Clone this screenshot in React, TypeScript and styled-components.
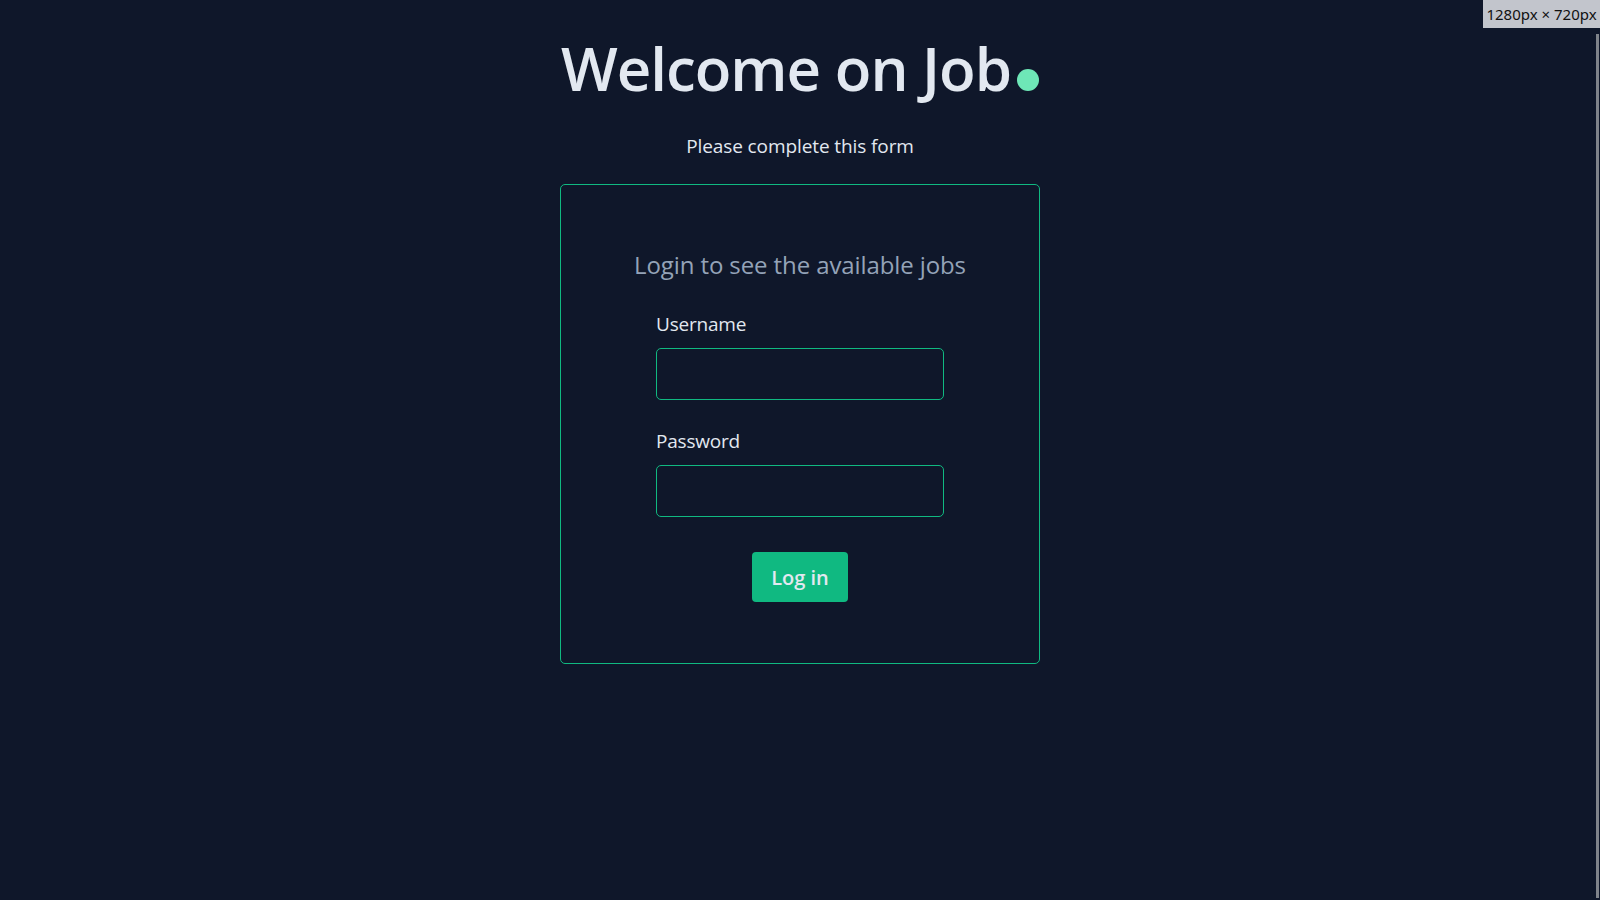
import React from "react";
import styled, { createGlobalStyle } from "styled-components";

const Global = createGlobalStyle`
  html, body { margin: 0; padding: 0; background: #0f172a; }
  body { font-family: "Open Sans", "Noto Sans", sans-serif; color: #e2e8f0; overflow: hidden; }
  * { box-sizing: border-box; }
`;

const Page = styled.main`
  min-height: 900px;
  display: flex;
  flex-direction: column;
  align-items: center;
  padding-top: 30px;
`;

const Title = styled.h1`
  margin: 0;
  font-size: 60px;
  line-height: 76px;
  font-weight: 650;
  color: #e2e8f0;
  letter-spacing: -1px;
  display: flex;
  align-items: baseline;
`;

const Dot = styled.span`
  display: inline-block;
  width: 22px;
  height: 22px;
  border-radius: 50%;
  background: #6ee7b7;
  margin-left: 6px;
`;

const Subtitle = styled.p`
  margin: 26px 0 0;
  font-size: 19px;
  line-height: 28px;
  letter-spacing: -0.1px;
  color: #e2e8f0;
`;

const Card = styled.section`
  margin-top: 24px;
  width: 480px;
  height: 480px;
  border: 1px solid #10b981;
  border-radius: 5px;
  display: flex;
  flex-direction: column;
  align-items: center;
  padding-top: 64px;
`;

const CardTitle = styled.h2`
  margin: 0;
  font-size: 24px;
  line-height: 32px;
  font-weight: 400;
  letter-spacing: -0.1px;
  color: #94a3b8;
`;

const Form = styled.form`
  width: 288px;
  display: flex;
  flex-direction: column;
  margin-top: 29px;
`;

const Label = styled.label<{ $gap?: number }>`
  font-size: 19px;
  line-height: 28px;
  letter-spacing: -0.2px;
  color: #e2e8f0;
  margin-top: ${(p) => p.$gap ?? 0}px;
  margin-bottom: 10px;
`;

const Input = styled.input`
  width: 288px;
  height: 52px;
  background: transparent;
  border: 1px solid #10b981;
  border-radius: 5px;
  color: #e2e8f0;
  font-size: 18px;
  padding: 0 12px;
  outline: none;
`;

const Button = styled.button`
  align-self: center;
  margin-top: 35px;
  width: 96px;
  height: 50px;
  border: none;
  border-radius: 4px;
  background: #10b981;
  color: #e2e8f0;
  font-family: inherit;
  font-size: 20px;
  font-weight: 600;
  cursor: pointer;
`;

const SizeBadge = styled.div`
  position: fixed;
  top: 0;
  right: 0;
  width: 117px;
  height: 28px;
  background: #c2c5cc;
  color: #111;
  font-family: "Noto Sans", sans-serif;
  font-size: 15px;
  display: flex;
  align-items: center;
  justify-content: center;
`;

const ScrollThumb = styled.div`
  position: fixed;
  top: 34px;
  right: 1px;
  width: 3px;
  height: 864px;
  background: #7f838a;
`;

export default function App() {
  return (
    <>
      <Global />
      <Page>
        <Title>
          Welcome on Job
          <Dot />
        </Title>
        <Subtitle>Please complete this form</Subtitle>
        <Card>
          <CardTitle>Login to see the available jobs</CardTitle>
          <Form onSubmit={(e) => e.preventDefault()}>
            <Label htmlFor="username">Username</Label>
            <Input id="username" type="text" />
            <Label htmlFor="password" $gap={27}>Password</Label>
            <Input id="password" type="password" />
            <Button type="submit">Log in</Button>
          </Form>
        </Card>
      </Page>
      <SizeBadge>1280px × 720px</SizeBadge>
      <ScrollThumb />
    </>
  );
}
